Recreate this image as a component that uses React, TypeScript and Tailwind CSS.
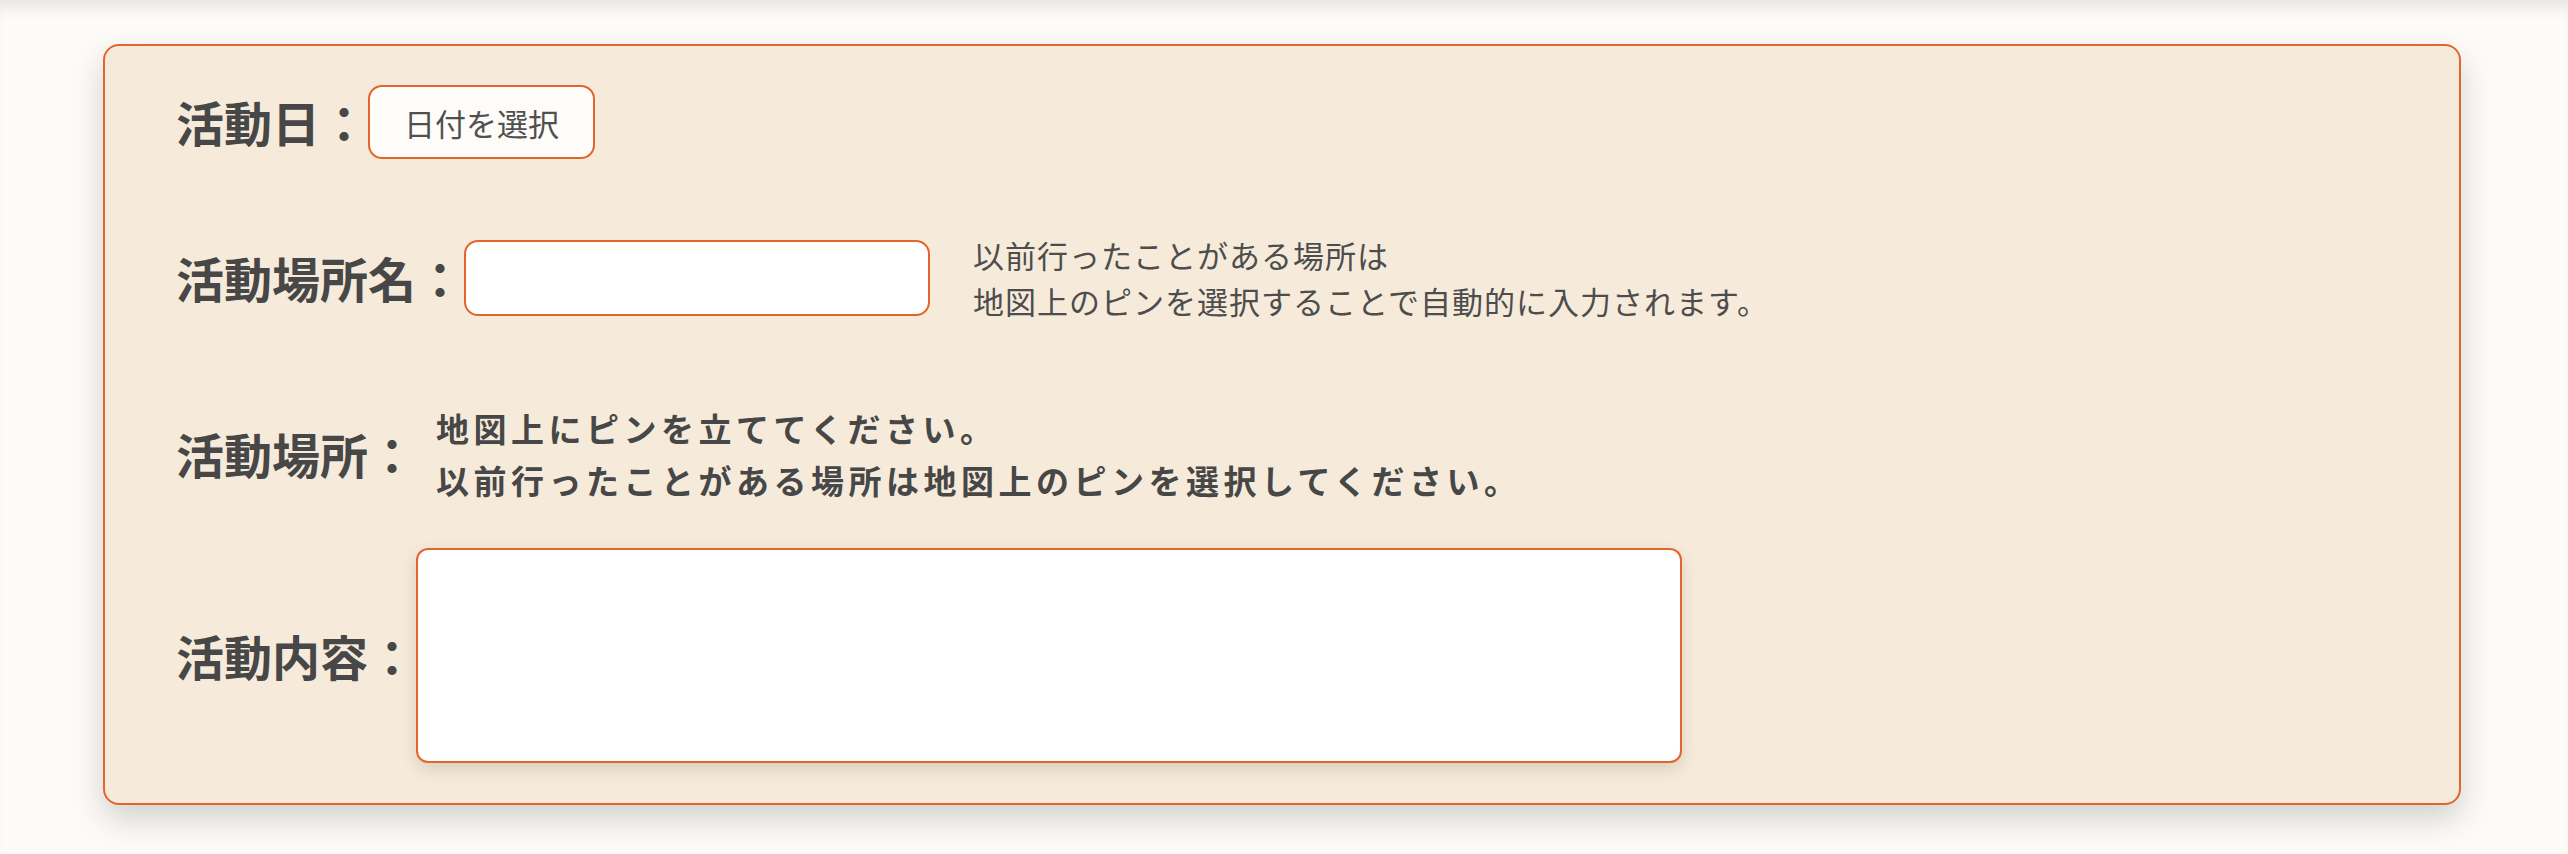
const jp = "font-['Noto_Sans_CJK_JP','Noto_Sans',sans-serif]";

function Label({ children }: { children: string }) {
  return (
    <span className="shrink-0 text-[48px] leading-[1.2] font-bold text-[#474747]">{children}</span>
  );
}

export default function App() {
  return (
    <div
      className={`min-h-[854px] bg-[#fcfbf7] pt-[44px] shadow-[inset_0_16px_16px_-10px_rgba(0,0,0,0.1)] ${jp}`}
    >
      <div className="ml-[103px] w-[2358px] rounded-[16px] border-2 border-[#e4642f] bg-[#f6ebda] pl-[71px] pt-[39px] pb-[40px] shadow-[0_14px_32px_rgba(0,0,0,0.17)]">
        {/* 活動日 */}
        <div className="flex items-center h-[74px]">
          <Label>活動日：</Label>
          <button className="h-[74px] px-[34px] rounded-[14px] border-2 border-[#e4642f] bg-[#fdfcf8] text-[31px] leading-none text-[#505050] font-normal">
            日付を選択
          </button>
        </div>

        {/* 活動場所名 */}
        <div className="flex items-center mt-[81px] h-[76px]">
          <Label>活動場所名：</Label>
          <input
            type="text"
            className="w-[466px] h-[76px] rounded-[14px] border-2 border-[#e4642f] bg-white outline-none"
          />
          <p className="ml-[43px] text-[31px] leading-[46px] tracking-[1px] text-[#4d4d4d] font-normal">
            以前行ったことがある場所は
            <br />
            地図上のピンを選択することで自動的に入力されます。
          </p>
        </div>

        {/* 活動場所 */}
        <div className="flex items-center mt-[86px]">
          <Label>活動場所：</Label>
          <p className="ml-[20px] text-[33px] leading-[52px] tracking-[4.5px] font-bold text-[#474747]">
            地図上にピンを立ててください。
            <br />
            以前行ったことがある場所は地図上のピンを選択してください。
          </p>
        </div>

        {/* 活動内容 */}
        <div className="flex items-center mt-[42px]">
          <Label>活動内容：</Label>
          <textarea className="w-[1266px] h-[215px] resize-none rounded-[12px] border-2 border-[#e4642f] bg-white outline-none shadow-[0_6px_16px_rgba(0,0,0,0.12)]" />
        </div>
      </div>
    </div>
  );
}
